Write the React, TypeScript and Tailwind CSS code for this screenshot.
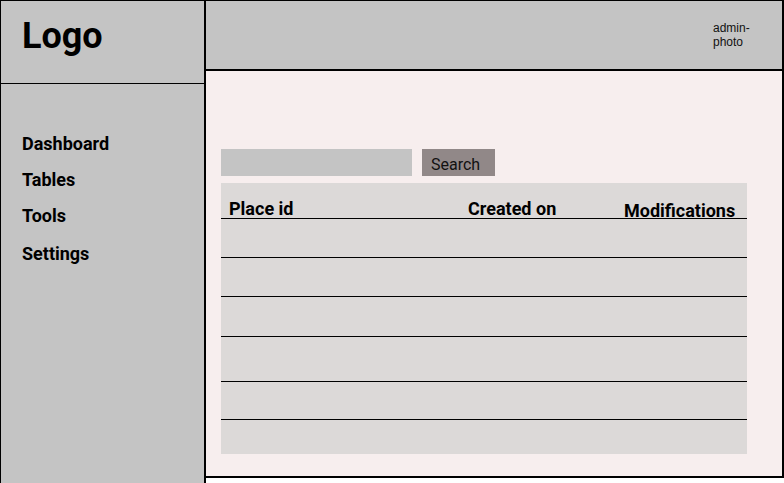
import React from 'react';

const navItems = [
  { label: 'Dashboard', h: 'h-[36px]' },
  { label: 'Tables', h: 'h-[36px]' },
  { label: 'Tools', h: 'h-[38px]' },
  { label: 'Settings', h: 'h-[24px]' },
];
const rowHeights = ['h-[39px]', 'h-[39px]', 'h-[40px]', 'h-[45px]', 'h-[38px]', 'h-[34px]'];

export default function App() {
  return (
    <div className="flex w-[784px] h-[483px] bg-white font-['Roboto',sans-serif] text-black overflow-hidden">
      {/* Sidebar */}
      <aside className="w-[206px] h-[483px] shrink-0 bg-[#c4c4c4] border-l border-t border-r-2 border-black flex flex-col">
        <div className="h-[83px] border-b border-black pl-[21px] pt-[12px]">
          <span className="text-[36px] font-bold leading-[46px]">Logo</span>
        </div>
        <nav className="flex flex-col pl-[21px] pt-[48px]">
          {navItems.map((item) => (
            <a key={item.label} className={`${item.h} text-[18px] font-bold leading-[24px]`}>
              {item.label}
            </a>
          ))}
        </nav>
      </aside>

      {/* Right side */}
      <div className="flex-1 flex flex-col">
        <header className="h-[71px] shrink-0 bg-[#c4c4c4] border-t border-b-2 border-r-2 border-black flex justify-end">
          <div className="w-[69px] pt-[20px] text-[12px] leading-[14px] text-[#111] font-['Liberation_Sans',sans-serif]">
            admin-
            <br />
            photo
          </div>
        </header>
        <main className="h-[407px] bg-[#f7eeee] border-b-2 border-r-2 border-black pl-[15px] pt-[78px]">
          <div className="flex gap-[10px]">
            <input className="w-[191px] h-[27px] bg-[#c4c4c4] outline-none" />
            <button className="w-[73px] h-[27px] bg-[#918888] text-[16px] text-[#111] text-left pl-[9px] pt-[4px]">
              Search
            </button>
          </div>
          <div className="mt-[7px] w-[526px] h-[271px] bg-[#dcd9d8]">
            <div className="h-[36px] border-b border-black relative text-[18px] font-bold leading-[20px]">
              <span className="absolute left-[8px] top-[16px]">Place id</span>
              <span className="absolute left-[247px] top-[16px]">Created on</span>
              <span className="absolute left-[403px] top-[18px]">Modifications</span>
            </div>
            {rowHeights.map((h, i) => (
              <div
                key={i}
                className={`${h} ${i < rowHeights.length - 1 ? 'border-b border-black' : ''}`}
              />
            ))}
          </div>
        </main>
      </div>
    </div>
  );
}
